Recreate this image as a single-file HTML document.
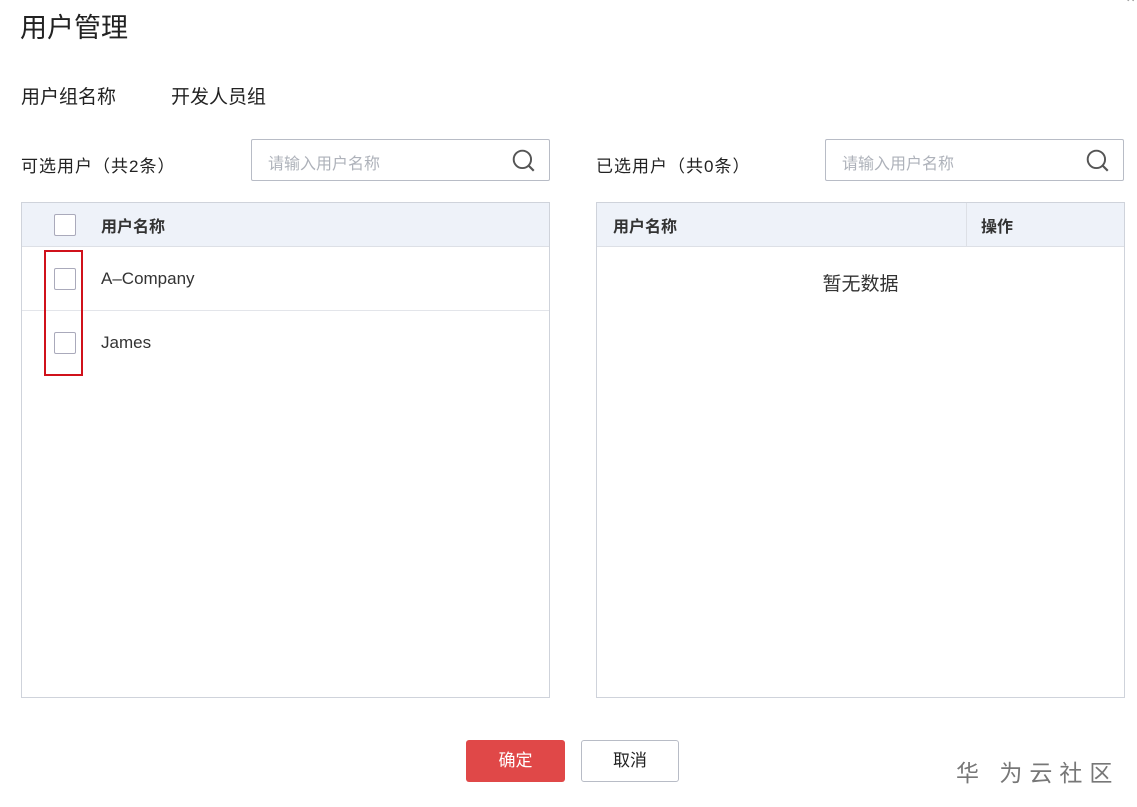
<!DOCTYPE html><html><head><meta charset="utf-8"><style>
*{margin:0;padding:0;box-sizing:border-box}
body{width:1137px;height:807px;background:#fff;position:relative;overflow:hidden;font-family:"Liberation Sans","Noto Sans CJK SC",sans-serif;color:#252b3a}
.a{position:absolute}
.cb{position:absolute;width:22px;height:22px;border:1px solid #aab;border-radius:2px;background:#fff}
.search{position:absolute;height:42px;border:1px solid #b8bcc6;border-radius:2px}
.search span{position:absolute;left:16px;top:10px;font-size:16px;color:#aeb2ba}
.tbl{position:absolute;border:1px solid #cfd3db;background:#fff}
.hd{position:absolute;left:0;right:0;top:0;height:44px;background:#eef2f9;border-bottom:1px solid #dde0e6}
.th{position:absolute;top:10px;font-size:16px;font-weight:bold;color:#333}
</style></head><body>
<div class="a" style="left:20px;top:6px;font-size:27px;color:#222">用户管理</div>
<div class="a" style="left:1124px;top:-6px;font-size:16px;color:#999">⌃</div>
<div class="a" style="left:21px;top:82px;font-size:19px;color:#222">用户组名称</div>
<div class="a" style="left:171px;top:82px;font-size:19px;color:#222">开发人员组</div>
<div class="a" style="left:21px;top:152px;font-size:17px;color:#222;letter-spacing:1px">可选用户（共2条）</div>
<div class="search" style="left:251px;top:139px;width:299px"><span>请输入用户名称</span>
<svg class="a" style="right:12px;top:8px" width="26" height="26" viewBox="0 0 24 24"><circle cx="10.5" cy="10.5" r="8" fill="none" stroke="#555" stroke-width="1.8"/><path d="M16.5 16.5L21 21" stroke="#555" stroke-width="2"/></svg></div>
<div class="a" style="left:596px;top:152px;font-size:17px;color:#222;letter-spacing:1px">已选用户（共0条）</div>
<div class="search" style="left:825px;top:139px;width:299px"><span>请输入用户名称</span>
<svg class="a" style="right:12px;top:8px" width="26" height="26" viewBox="0 0 24 24"><circle cx="10.5" cy="10.5" r="8" fill="none" stroke="#555" stroke-width="1.8"/><path d="M16.5 16.5L21 21" stroke="#555" stroke-width="2"/></svg></div>

<div class="tbl" style="left:21px;top:202px;width:529px;height:496px">
<div class="hd"></div>
<div class="cb" style="left:32px;top:11px"></div>
<div class="th" style="left:79px">用户名称</div>
<div class="a" style="left:0;right:0;top:107px;border-top:1px solid #e3e5ea"></div>
<div class="cb" style="left:32px;top:65px"></div>
<div class="a" style="left:79px;top:66px;font-size:17px;color:#333">A–Company</div>
<div class="cb" style="left:32px;top:129px"></div>
<div class="a" style="left:79px;top:130px;font-size:17px;color:#333">James</div>
</div>
<div class="a" style="left:44px;top:250px;width:39px;height:126px;border:2px solid #d0111b"></div>

<div class="tbl" style="left:596px;top:202px;width:529px;height:496px">
<div class="hd"></div>
<div class="a" style="left:369px;top:0;height:44px;border-left:1px solid #dde0e6"></div>
<div class="th" style="left:16px">用户名称</div>
<div class="th" style="left:384px">操作</div>
<div class="a" style="left:0;right:0;top:66px;text-align:center;font-size:19px;color:#333">暂无数据</div>
</div>

<div class="a" style="left:466px;top:740px;width:99px;height:42px;background:#e04848;border-radius:3px;color:#fff;font-size:17px;text-align:center;line-height:42px">确定</div>
<div class="a" style="left:581px;top:740px;width:98px;height:42px;border:1px solid #b8bcc6;border-radius:3px;color:#222;font-size:17px;text-align:center;line-height:40px">取消</div>
<div class="a" style="left:956px;top:754px;font-size:23px;color:#777;letter-spacing:7px">华 为云社区</div>
</body></html>
